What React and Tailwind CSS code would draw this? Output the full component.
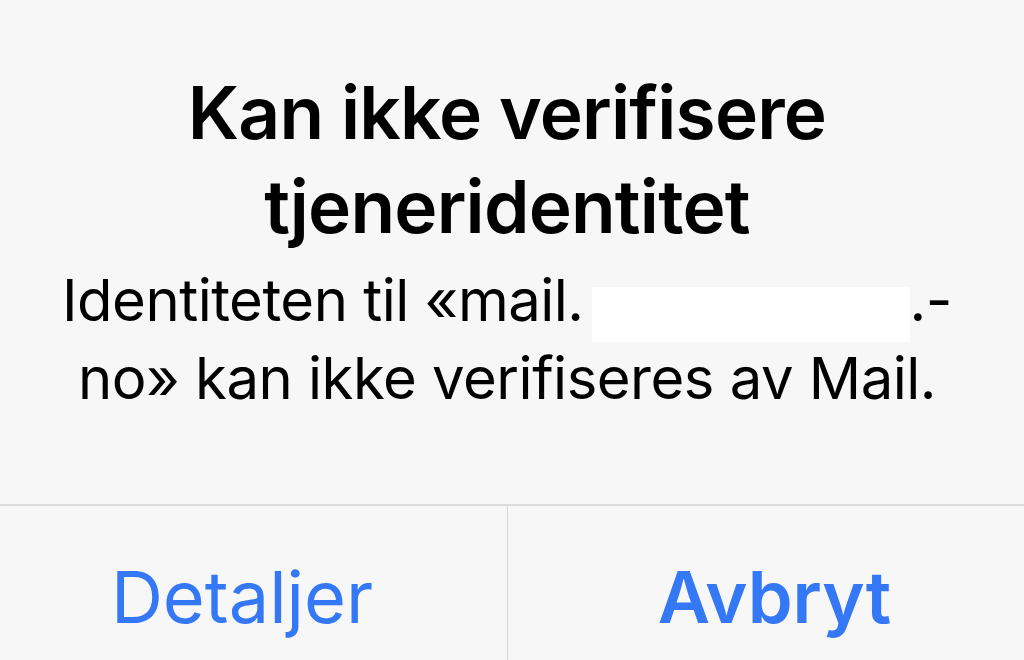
export default function App() {
  return (
    <div
      className="w-[1024px] h-[660px] bg-[#f7f7f7] flex flex-col overflow-hidden text-black"
      style={{ fontFamily: 'Inter, "Noto Sans", sans-serif' }}
    >
      <div className="pt-[66px] pr-[10px] text-center">
        <h1 className="text-[73px] leading-[94px] font-semibold tracking-[-0.8px]">
          Kan ikke verifisere
          <br />
          tjeneridentitet
        </h1>
        <p className="mt-[10px] text-[58px] leading-[72px] tracking-[-0.5px]">
          Identiteten til «mail.
          <span className="inline-block align-[-21px] ml-[8px] w-[318px] h-[55px] bg-white" />
          .-
          <br />
          no» kan ikke verifiseres av Mail.
        </p>
      </div>
      <div className="mt-[90px] flex-1 grid grid-cols-[507px_1fr] border-t-2 border-[#dcdcdc]">
        <div className="flex justify-center pt-[28px] pr-[23px]">
          <button className="text-[72px] leading-[94px] text-[#3478f6]">Detaljer</button>
        </div>
        <div className="flex justify-center pt-[28px] pl-[17px] border-l border-[#d6d6d6]">
          <button className="text-[72px] leading-[94px] font-semibold text-[#3478f6]">Avbryt</button>
        </div>
      </div>
    </div>
  )
}
